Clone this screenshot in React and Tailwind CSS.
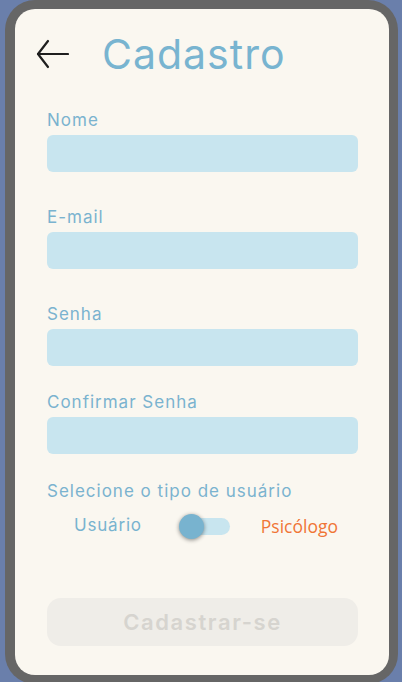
const fields = [
  { label: 'Nome', mt: 'mt-[32px]' },
  { label: 'E-mail', mt: 'mt-[35px]' },
  { label: 'Senha', mt: 'mt-[35px]' },
  { label: 'Confirmar Senha', mt: 'mt-[26px]' },
]

function BackArrow() {
  return (
    <svg width="33" height="30" viewBox="0 0 33 30" fill="none" stroke="#1f1f1f" strokeWidth="2.2" strokeLinecap="round" strokeLinejoin="round">
      <path d="M2 15 H32" />
      <path d="M12 2 L2 15 L12 28" />
    </svg>
  )
}

export default function App() {
  return (
    <div className="min-h-screen bg-[#6a7fab] pl-[5px] pr-[4px] font-['Inter',sans-serif]">
      <div className="bg-[#666666] rounded-[30px] pt-[9px] pl-[10px] pr-[9px] pb-[9px]">
        <div className="bg-[#faf7f0] rounded-[20px] h-[666px] pl-[32px] pr-[31px] pt-[21px]">
          {/* Header */}
          <div className="flex items-center h-[48px]">
            <div className="-ml-[11px]">
              <BackArrow />
            </div>
            <h1 className="ml-[33px] text-[41px] font-normal text-[#78b4d0] tracking-[1px] leading-none">
              Cadastro
            </h1>
          </div>

          {/* Campos */}
          {fields.map((field) => (
            <div key={field.label} className={field.mt}>
              <label className="block text-[17px] leading-[20px] tracking-[1px] text-[#7ab3cf]">{field.label}</label>
              <div className="mt-[5px] h-[37px] rounded-[6px] bg-[#c8e5ef]"></div>
            </div>
          ))}

          {/* Tipo de usuário */}
          <p className="mt-[27px] text-[17px] leading-[20px] tracking-[1px] text-[#7ab3cf]">Selecione o tipo de usuário</p>
          <div className="mt-[13px] flex items-center h-[24px]">
            <span className="ml-[27px] text-[17px] tracking-[0.8px] text-[#78b3cf]">Usuário</span>
            <div className="relative ml-[41px] w-[47px] h-[17px] rounded-full bg-[#c8e5ef]">
              <div className="absolute -left-[4px] -top-[4px] w-[25px] h-[25px] rounded-full bg-[#78b3cf] shadow-[0_1px_4px_rgba(0,0,0,0.45)]"></div>
            </div>
            <span className="ml-[31px] text-[17.5px] text-[#f07536] font-['Open_Sans',sans-serif]">Psicólogo</span>
          </div>

          {/* Botão */}
          <button className="mt-[60px] w-full h-[48px] rounded-[14px] bg-[#efede8] text-[22px] font-semibold text-[#d6d4cf] tracking-[1.6px]">
            Cadastrar-se
          </button>
        </div>
      </div>
    </div>
  )
}
